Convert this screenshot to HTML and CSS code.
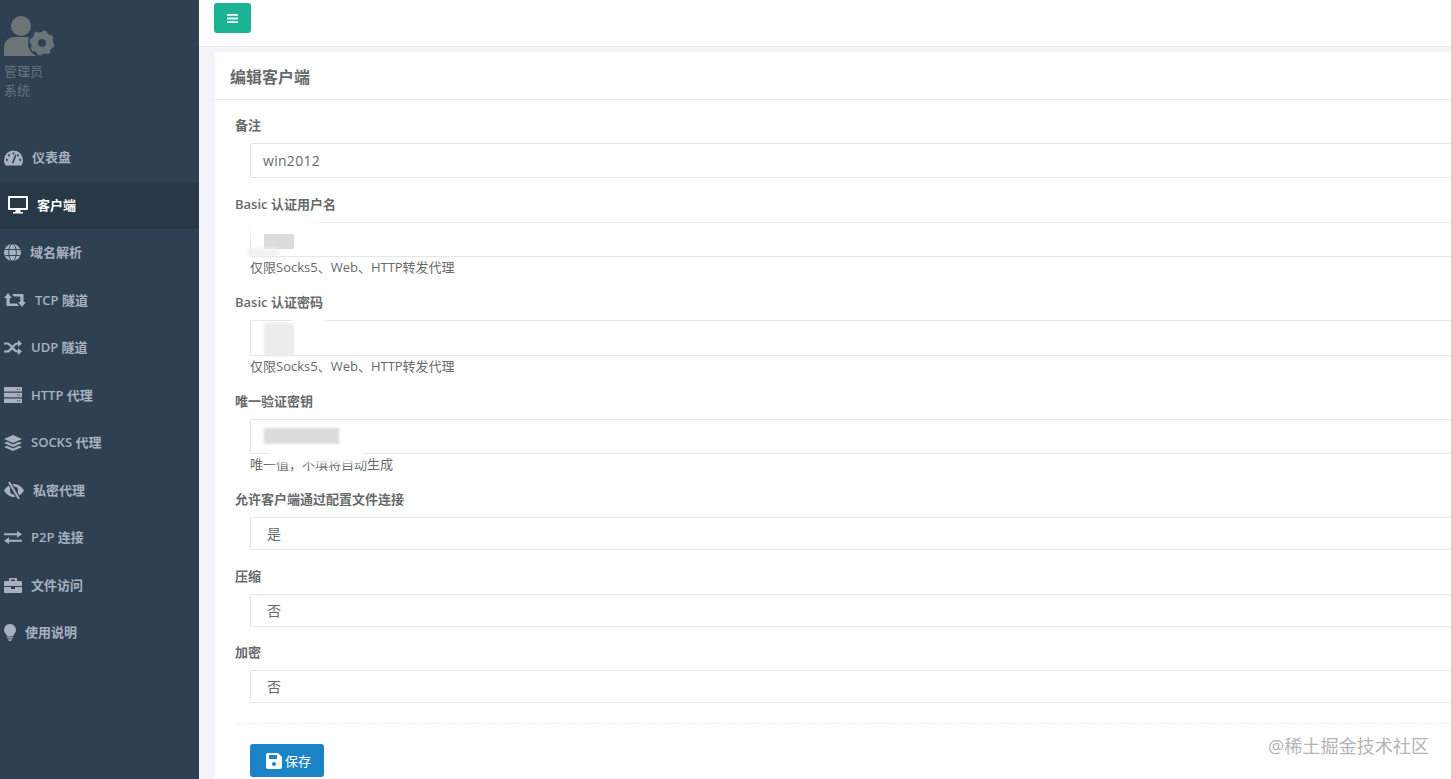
FILE: index.html
```html
<!DOCTYPE html>
<html lang="zh-CN">
<head>
<meta charset="utf-8">
<title>编辑客户端</title>
<link rel="stylesheet" href="styles.css">
</head>
<body>
<div class="app">
  <aside class="sidebar">
    <div class="profile">
      <svg class="avatar" width="50" height="40" viewBox="0 0 50 40">
        <circle cx="17" cy="10" r="10" fill="currentColor"/>
        <path d="M0 40V32C0 25 5 21 11 21H23C29 21 34 25 34 32V40Z" fill="currentColor"/>
        <circle cx="38" cy="27" r="14" fill="#2f4052"/>
        <circle cx="38" cy="27" r="7.500" fill="none" stroke="currentColor" stroke-width="7"/>
        <circle cx="38" cy="27" r="11" fill="none" stroke="currentColor" stroke-width="3" stroke-dasharray="4.300 4.340"/>
      </svg>
      <div class="profile-line">管理员</div>
      <div class="profile-line">系统</div>
    </div>
    <nav class="nav">
      <a class="nav-item">
        <svg width="19" height="16" viewBox="0 0 20 16"><path fill="currentColor" d="M10 0A10 10 0 0 0 0 10c0 2 .6 4 1.600 5.500a1 1 0 0 0 .8.5h15.200a1 1 0 0 0 .8-.5C19.400 14 20 12 20 10A10 10 0 0 0 10 0Z"/><g fill="#2f4052"><circle cx="10" cy="3.200" r="1.100"/><circle cx="5.200" cy="5.200" r="1.100"/><circle cx="3" cy="10" r="1.100"/><circle cx="17" cy="10" r="1.100"/><circle cx="14.800" cy="5.200" r="1.100"/></g><path d="M9 13.500 12.500 4.500" stroke="#2f4052" stroke-width="1.600"/></svg>
        <span>仪表盘</span>
      </a>
      <a class="nav-item is-active">
        <svg width="20" height="18" viewBox="0 0 20 18"><path fill="currentColor" fill-rule="evenodd" d="M1 0h18a1 1 0 0 1 1 1v12a1 1 0 0 1-1 1h-6.500v2H15v1.500H5V16h2.500v-2H1a1 1 0 0 1-1-1V1a1 1 0 0 1 1-1ZM2 2v10h16V2Z"/></svg>
        <span>客户端</span>
      </a>
      <a class="nav-item">
        <svg width="17" height="17" viewBox="0 0 17 17"><circle cx="8.500" cy="8.500" r="8.500" fill="currentColor"/><g fill="none" stroke="#2f4052" stroke-width=".9"><ellipse cx="8.500" cy="8.500" rx="3.800" ry="8.500"/><path d="M.5 5.500h16M.5 11.500h16"/></g></svg>
        <span>域名解析</span>
      </a>
      <a class="nav-item">
        <svg width="22" height="14" viewBox="0 0 22 14"><path fill="currentColor" d="M4 0 8 5H5.700v5.500H13l2 2.500H3.500a1 1 0 0 1-1-1V5H0ZM18 14l-4-5h2.300V3.500H10L8 1h10.500a1 1 0 0 1 1 1v7H22Z"/></svg>
        <span>TCP 隧道</span>
      </a>
      <a class="nav-item">
        <svg width="18" height="15" viewBox="0 0 18 15"><g fill="none" stroke="currentColor" stroke-width="2.200"><path d="M0 3.500h3c4.500 0 6 8 10.500 8H15"/><path d="M0 11.500h3c4.500 0 6-8 10.500-8H15"/></g><path fill="currentColor" d="M14 0l4 3.500L14 7ZM14 8l4 3.500L14 15Z"/></svg>
        <span>UDP 隧道</span>
      </a>
      <a class="nav-item">
        <svg width="18" height="16" viewBox="0 0 18 16"><path fill="currentColor" d="M0 0h18v4.500H0ZM0 5.750h18v4.500H0ZM0 11.500h18V16H0Z"/><g fill="#2f4052"><path d="M13 1.800h1v1h-1ZM15 1.800h1v1h-1ZM13 7.500h1v1h-1ZM15 7.500h1v1h-1ZM13 13.200h1v1h-1ZM15 13.200h1v1h-1Z"/></g></svg>
        <span>HTTP 代理</span>
      </a>
      <a class="nav-item">
        <svg width="18" height="16" viewBox="0 0 18 16"><path fill="currentColor" d="M9 0 18 4 9 8 0 4ZM3 6.800 9 9.500l6-2.700L18 8l-9 4-9-4ZM3 10.800 9 13.500l6-2.700L18 12l-9 4-9-4Z"/></svg>
        <span>SOCKS 代理</span>
      </a>
      <a class="nav-item">
        <svg width="20" height="17" viewBox="0 0 20 17"><path fill="currentColor" fill-rule="evenodd" d="M10 2c4.500 0 8 3.200 10 6.500-2 3.300-5.500 6.500-10 6.500S2 11.800 0 8.500C2 5.200 5.500 2 10 2Zm0 2.500a4 4 0 1 0 0 8 4 4 0 0 0 0-8Z"/><path d="M5 0 15 17" stroke="#2f4052" stroke-width="4"/><path d="M5 0 15 17" stroke="currentColor" stroke-width="2"/></svg>
        <span>私密代理</span>
      </a>
      <a class="nav-item">
        <svg width="18" height="13" viewBox="0 0 18 13"><path fill="currentColor" d="M0 2.300h13V0l5 3.300-5 3.400V4.300H0ZM18 8.700H5V6.300L0 9.700 5 13v-2.300h13Z"/></svg>
        <span>P2P 连接</span>
      </a>
      <a class="nav-item">
        <svg width="18" height="15" viewBox="0 0 18 15"><path fill="currentColor" fill-rule="evenodd" d="M6 0h6a1 1 0 0 1 1 1v2h4a1 1 0 0 1 1 1v4H0V4a1 1 0 0 1 1-1h4V1a1 1 0 0 1 1-1Zm1 1.500V3h4V1.500ZM0 9h7v2h4V9h7v5a1 1 0 0 1-1 1H1a1 1 0 0 1-1-1Z"/></svg>
        <span>文件访问</span>
      </a>
      <a class="nav-item">
        <svg width="12" height="17" viewBox="0 0 12 17"><path fill="currentColor" d="M6 0a6 6 0 0 1 4 10.400c-.8.8-1 1.600-1 2.100H3c0-.5-.2-1.300-1-2.100A6 6 0 0 1 6 0ZM3.200 13.300h5.600v1.300H3.200ZM4 15.200h4L7 17H5Z"/></svg>
        <span>使用说明</span>
      </a>
    </nav>
  </aside>

  <main class="main">
    <header class="topbar">
      <button class="toggle" type="button" aria-label="menu">
        <svg width="11" height="9" viewBox="0 0 11 9"><path fill="currentColor" d="M0 0h11v1.800H0ZM0 3.600h11v1.800H0ZM0 7.200h11V9H0Z"/></svg>
      </button>
    </header>

    <section class="card">
      <h2 class="card-title">编辑客户端</h2>
      <form class="form">
        <div class="group">
          <label class="label">备注</label>
          <input class="control" type="text" value="win2012">
        </div>
        <div class="group">
          <label class="label">Basic 认证用户名</label>
          <div class="field">
            <input class="control" type="text">
            <div class="smudge smudge-a1"></div>
            <div class="smudge smudge-a2"></div>
            <div class="smudge smudge-a3"></div>
          </div>
          <p class="help">仅限Socks5、Web、HTTP转发代理</p>
        </div>
        <div class="group">
          <label class="label">Basic 认证密码</label>
          <div class="field">
            <input class="control control-tall" type="text">
            <div class="smudge smudge-b1"></div>
            <div class="smudge smudge-b2"></div>
          </div>
          <p class="help">仅限Socks5、Web、HTTP转发代理</p>
        </div>
        <div class="group">
          <label class="label">唯一验证密钥</label>
          <div class="field">
            <input class="control" type="text">
            <div class="smudge smudge-c1"></div>
            <div class="smudge smudge-c2"></div>
          </div>
          <p class="help">唯一值，不填将自动生成</p>
        </div>
        <div class="group">
          <label class="label">允许客户端通过配置文件连接</label>
          <select class="control control-select"><option>是</option><option>否</option></select>
        </div>
        <div class="group group-tight">
          <label class="label">压缩</label>
          <select class="control control-select"><option>否</option><option>是</option></select>
        </div>
        <div class="group">
          <label class="label">加密</label>
          <select class="control control-select"><option>否</option><option>是</option></select>
        </div>
        <div class="divider"></div>
        <button class="save" type="button">
          <svg width="16" height="16" viewBox="0 0 16 16"><path fill="currentColor" fill-rule="evenodd" d="M2 0h10l4 4v10a2 2 0 0 1-2 2H2a2 2 0 0 1-2-2V2a2 2 0 0 1 2-2Zm1 2v4h8V2Zm5 7a2 2 0 1 0 0 4 2 2 0 0 0 0-4Z"/></svg>
          <span>保存</span>
        </button>
      </form>
    </section>
    <div class="watermark">@稀土掘金技术社区</div>
  </main>
</div>
</body>
</html>
```
FILE: styles.css
```css
* { box-sizing: border-box; }

html, body {
  margin: 0;
  height: 100%;
  overflow: hidden;
}

body {
  font-family: "Open Sans", "Noto Sans CJK SC", sans-serif;
  font-size: 13px;
  color: #676a6c;
}

.app {
  display: flex;
  height: 779px;
}

.sidebar {
  flex: 0 0 199px;
  background: #2f4052;
  color: #a7b1c2;
}

.profile {
  height: 134px;
  padding: 16px 0 0 4px;
}

.avatar {
  display: block;
  color: #6d7478;
  margin-bottom: 6px;
}

.profile-line {
  height: 19px;
  line-height: 19px;
  color: #66757f;
}

.nav-item {
  display: flex;
  align-items: center;
  gap: 9px;
  height: 47.5px;
  padding-left: 4px;
  font-weight: 600;
  color: #a7b1c2;
}

.nav-item svg { flex: none; }

.nav-item span { margin-bottom: 2px; }

.nav-item.is-active {
  background: #293846;
  color: #fff;
  padding-left: 8px;
}

.main {
  position: relative;
  flex: 1;
  min-width: 0;
  overflow: hidden;
  background: #f3f3f8;
}

.topbar {
  height: 47px;
  padding: 3px 0 0 15px;
  background: #fff;
  border-bottom: 1px solid #e7eaec;
}

.toggle {
  display: flex;
  align-items: center;
  justify-content: center;
  width: 37px;
  height: 30px;
  padding: 0;
  border: 0;
  border-radius: 3px;
  background: #1ab394;
  color: #fff;
}

.card {
  width: calc(100% + 20px);
  height: 740px;
  margin: 5px 0 0 16px;
  background: #fff;
}

.card-title {
  height: 48px;
  margin: 0;
  padding-left: 15px;
  font-size: 16px;
  font-weight: 600;
  line-height: 50px;
  border-bottom: 1px solid #e7eaec;
}

.form {
  padding: 16px 0 0 20px;
}

.group {
  position: relative;
  margin-bottom: 17px;
}

.group-tight { margin-bottom: 16px; }

.label {
  display: block;
  height: 18px;
  margin-bottom: 9px;
  font-weight: 600;
  line-height: 18px;
}

.field {
  position: relative;
  margin-left: 15px;
}

.group > .control { margin-left: 15px; }

.control {
  display: block;
  width: calc(100% - 15px);
  height: 35px;
  padding: 0 12px;
  border: 1px solid #e5e6e7;
  border-radius: 1px;
  background: #fff;
  font: inherit;
  font-size: 14px;
  letter-spacing: .3px;
  color: #676a6c;
  outline: none;
}

.field .control { width: 100%; }

.field .control-tall { height: 36px; }

.control-select {
  height: 33px;
  padding-left: 16px;
  appearance: none;
}

.help {
  height: 18px;
  margin: 1px 0 0 15px;
  line-height: 18px;
}

.smudge {
  position: absolute;
  pointer-events: none;
}

.smudge-a1 { left: -4px; top: -6px; width: 72px; height: 16px; background: #fff; filter: blur(3px); }
.smudge-a2 { left: 14px; top: 12px; width: 30px; height: 15px; background: #dcdcdc; filter: blur(.6px); }
.smudge-a3 { left: -2px; top: 27px; width: 30px; height: 7px; background: #f0f0f0; filter: blur(2px); }
.smudge-b1 { left: 14px; top: 3px; width: 30px; height: 33px; background: #ececec; filter: blur(1px); }
.smudge-b2 { left: 42px; top: -4px; width: 34px; height: 8px; background: #fff; filter: blur(2px); }
.smudge-c1 { left: 14px; top: 9px; width: 75px; height: 16px; background: #dcdcdc; filter: blur(.8px); }
.smudge-c2 { left: 20px; top: 28px; width: 95px; height: 16px; background: #fff; filter: blur(2px); }

.divider {
  margin: 20px 0 20px 3px;
  border-top: 1px dashed #edeff0;
}

.save {
  display: flex;
  align-items: center;
  gap: 3px;
  height: 33px;
  margin-left: 15px;
  padding: 0 13px 0 16px;
  border: 0;
  border-radius: 3px;
  background: #1c84c6;
  color: #fff;
  font: inherit;
}

.watermark {
  position: absolute;
  right: 22px;
  bottom: 21px;
  font-size: 18.100px;
  line-height: 24px;
  color: #b4b4b4;
}
```
